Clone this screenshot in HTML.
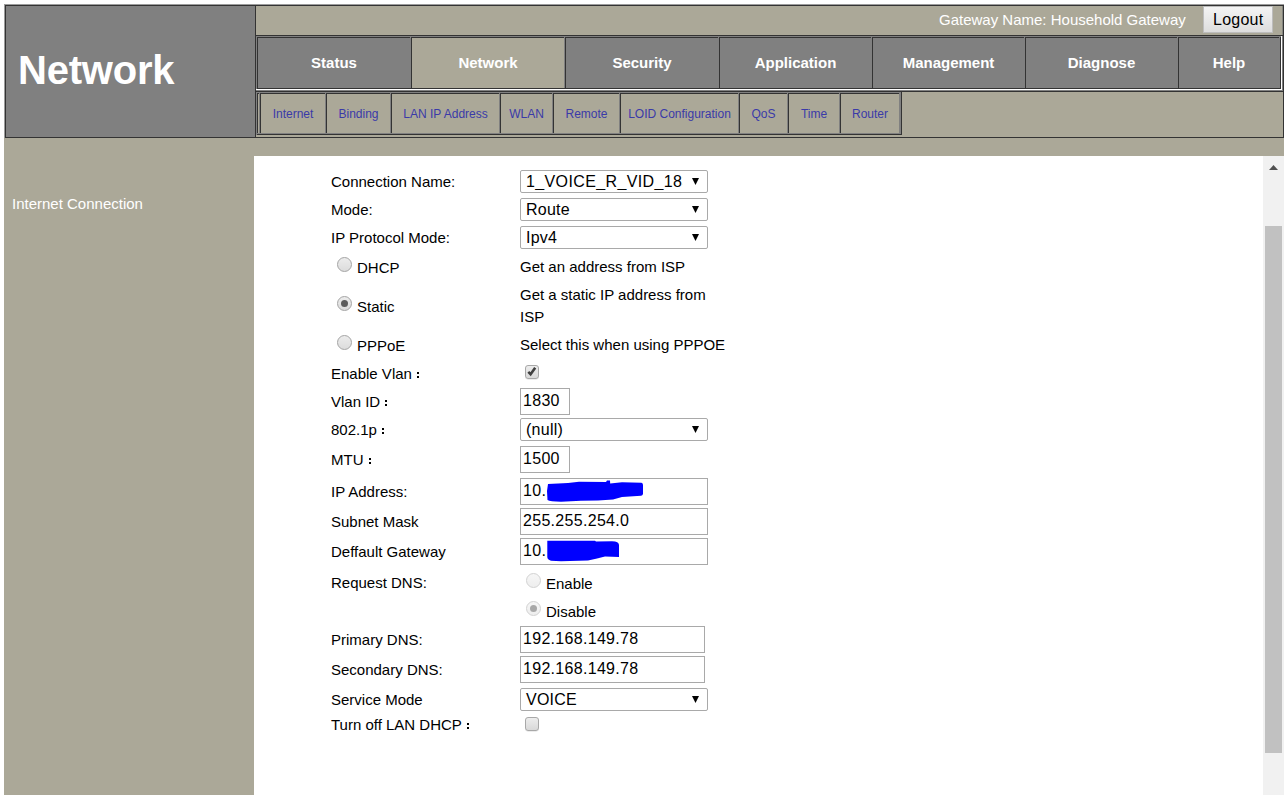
<!DOCTYPE html>
<html><head><meta charset="utf-8">
<style>
html,body{margin:0;padding:0;background:#fff;width:1285px;height:795px;overflow:hidden;}
body{font-family:"Liberation Sans",sans-serif;position:relative;}
.a{position:absolute;box-sizing:border-box;}
.t{position:absolute;white-space:nowrap;line-height:1;}
.dk{background:#333;}
.mm{position:absolute;top:37px;height:51px;background:#808080;border-left:1px solid #333;border-top:1px solid #333;box-sizing:border-box;color:#fff;font-weight:bold;font-size:15px;text-align:center;line-height:50px;}
.mm.on{background:#aba898;}
.sm{position:absolute;top:93px;height:40px;background:#aba898;border-left:1px solid #333;border-top:1px solid #333;box-sizing:border-box;color:#3a3aa8;font-size:12px;text-align:center;line-height:40px;}
.lbl{position:absolute;left:331px;font-size:15px;color:#000;white-space:nowrap;line-height:1;}
.sel{position:absolute;left:520px;width:188px;height:23px;border:1px solid #a9a9a9;border-radius:2px;box-sizing:border-box;background:#fff;font-size:16px;}
.sel span{position:absolute;left:5px;top:3px;letter-spacing:0.25px;line-height:1;white-space:nowrap;}
.sel i{position:absolute;left:171px;top:7px;width:7px;height:7px;background:#000;clip-path:polygon(0 0,100% 0,50% 100%);}
.inp{position:absolute;left:520px;height:27px;border:1px solid #a9a9a9;box-sizing:border-box;background:#fff;font-size:16px;}
.inp span{position:absolute;left:2px;top:4px;letter-spacing:0.3px;line-height:1;white-space:nowrap;}

.fc{display:inline-block;width:2px;height:2px;background:#000;box-shadow:0 4px 0 #000;margin-left:5px;vertical-align:5px;}
.rad{position:absolute;width:15px;height:15px;border-radius:50%;box-sizing:border-box;border:1px solid #a4a4a4;background:linear-gradient(#ececec,#dcdcdc);}
.rad.on::after{content:"";position:absolute;left:3px;top:3px;width:7px;height:7px;border-radius:50%;background:#5c5c5c;}
.rad.dis{border-color:#d2d2d2;background:linear-gradient(#f6f6f6,#eeeeee);}
.rad.dis.on::after{background:#a8a8a8;}
.chk{position:absolute;width:14px;height:14px;box-sizing:border-box;border:1px solid #a8a8a8;border-radius:3px;background:linear-gradient(#ededed,#d9d9d9);box-shadow:0 0.5px 0.5px rgba(0,0,0,0.15);}
.chk svg{position:absolute;left:-1px;top:-1px;}
</style></head>
<body>
<div class="a" style="left:4px;top:4px;width:1px;height:134px;background:#9c9c9c;"></div>
<div class="a" style="left:4px;top:4px;width:1280px;height:1px;background:#9c9c9c;"></div>
<div class="a" style="left:5px;top:5px;width:1279px;height:133px;background:#333;"></div>
<div class="a" style="left:6px;top:6px;width:1277px;height:131px;background:#aba898;"></div>
<div class="a" style="left:6px;top:6px;width:249px;height:131px;background:#808080;"></div>
<div class="a" style="left:255px;top:6px;width:1px;height:131px;background:#333;"></div>
<div class="t" style="left:18px;top:50px;font-size:40px;font-weight:bold;color:#fff;letter-spacing:-0.2px;">Network</div>
<div class="t" style="left:939px;top:12px;font-size:15px;color:#fff;">Gateway Name: Household Gateway</div>
<div class="a" style="left:1203px;top:6px;width:70px;height:27px;background:linear-gradient(#f4f4f4,#dddddd);border:1px solid #bdbdbd;"></div>
<div class="t" style="left:1213px;top:12px;font-size:16px;color:#000;letter-spacing:0.25px;">Logout</div>
<div class="a" style="left:256px;top:35px;width:1027px;height:1px;background:#333;"></div>
<div class="a" style="left:1282px;top:6px;width:1px;height:29px;background:#858580;"></div>
<div class="a" style="left:256px;top:36px;width:1027px;height:55px;background:#808080;"></div>
<div class="a" style="left:256px;top:89px;width:1026px;height:1px;background:#fff;"></div>
<div class="a" style="left:1281px;top:36px;width:1px;height:54px;background:#fff;"></div>
<div class="a" style="left:257px;top:88px;width:1024px;height:1px;background:#333;"></div>
<div class="a" style="left:1280px;top:37px;width:1px;height:52px;background:#333;"></div>
<div class="mm" style="left:257px;width:153px;">Status</div>
<div class="mm on" style="left:411px;width:153px;">Network</div>
<div class="mm" style="left:565px;width:153px;">Security</div>
<div class="mm" style="left:719px;width:152px;">Application</div>
<div class="mm" style="left:872px;width:152px;">Management</div>
<div class="mm" style="left:1025px;width:152px;">Diagnose</div>
<div class="mm" style="left:1178px;width:101px;">Help</div>
<div class="a" style="left:256px;top:91px;width:1027px;height:1px;background:#333;"></div>
<div class="a" style="left:256px;top:92px;width:1px;height:43px;background:#808080;"></div>
<div class="a" style="left:257px;top:92px;width:645px;height:43px;background:#808080;"></div>
<div class="a" style="left:257px;top:93px;width:2px;height:40px;background:#333;"></div>
<div class="a" style="left:258px;top:94px;width:1px;height:39px;background:#aba898;"></div>
<div class="a" style="left:901px;top:92px;width:1px;height:43px;background:#333;"></div>
<div class="a" style="left:257px;top:134px;width:645px;height:1px;background:#333;"></div>
<div class="sm" style="left:260px;width:65px;">Internet</div>
<div class="sm" style="left:326px;width:64px;">Binding</div>
<div class="sm" style="left:391px;width:108px;">LAN IP Address</div>
<div class="sm" style="left:500px;width:52px;">WLAN</div>
<div class="sm" style="left:553px;width:66px;">Remote</div>
<div class="sm" style="left:620px;width:118px;">LOID Configuration</div>
<div class="sm" style="left:739px;width:48px;">QoS</div>
<div class="sm" style="left:788px;width:51px;">Time</div>
<div class="sm" style="left:840px;width:59px;">Router</div>
<!-- below header -->
<div class="a" style="left:4px;top:138px;width:1280px;height:18px;background:#aba898;"></div>
<div class="a" style="left:4px;top:156px;width:250px;height:639px;background:#aba898;"></div>
<div class="t" style="left:12px;top:196px;font-size:15px;color:#fff;">Internet Connection</div>
<!-- scrollbar -->
<div class="a" style="left:1263px;top:156px;width:21px;height:639px;background:#f1f1f1;"></div>
<div class="a" style="left:1265px;top:226px;width:17px;height:527px;background:#c1c1c1;"></div>
<svg class="a" style="left:1263px;top:160px;" width="21" height="14"><polygon points="6,10 15,10 10.5,5" fill="#505050"/></svg>

<!-- form labels -->
<div class="lbl" style="top:174px;">Connection Name:</div>
<div class="lbl" style="top:202px;">Mode:</div>
<div class="lbl" style="top:230px;">IP Protocol Mode:</div>
<div class="lbl" style="top:260px;left:357px;">DHCP</div>
<div class="lbl" style="top:299px;left:357px;">Static</div>
<div class="lbl" style="top:338px;left:357px;">PPPoE</div>
<div class="lbl" style="top:366px;">Enable Vlan<i class="fc"></i></div>
<div class="lbl" style="top:394px;">Vlan ID<i class="fc"></i></div>
<div class="lbl" style="top:422px;">802.1p<i class="fc"></i></div>
<div class="lbl" style="top:452px;">MTU<i class="fc"></i></div>
<div class="lbl" style="top:484px;">IP Address:</div>
<div class="lbl" style="top:514px;">Subnet Mask</div>
<div class="lbl" style="top:544px;">Deffault Gateway</div>
<div class="lbl" style="top:575px;">Request DNS:</div>
<div class="lbl" style="top:632px;">Primary DNS:</div>
<div class="lbl" style="top:662px;">Secondary DNS:</div>
<div class="lbl" style="top:692px;">Service Mode</div>
<div class="lbl" style="top:717px;">Turn off LAN DHCP<i class="fc"></i></div>
<!-- radios -->
<div class="rad" style="left:337px;top:257px;"></div>
<div class="rad on" style="left:337px;top:296px;"></div>
<div class="rad" style="left:337px;top:335px;"></div>
<div class="rad dis" style="left:526px;top:573px;"></div>
<div class="rad dis on" style="left:526px;top:601px;"></div>
<!-- descriptions -->
<div class="lbl" style="left:520px;top:259px;">Get an address from ISP</div>
<div class="lbl" style="left:520px;top:287px;">Get a static IP address from</div>
<div class="lbl" style="left:520px;top:309px;">ISP</div>
<div class="lbl" style="left:520px;top:337px;">Select this when using PPPOE</div>
<div class="lbl" style="left:546px;top:576px;">Enable</div>
<div class="lbl" style="left:546px;top:604px;">Disable</div>
<!-- selects -->
<div class="sel" style="top:170px;"><span style="width:157px;overflow:hidden;letter-spacing:0.38px;">1_VOICE_R_VID_1830</span><i></i></div>
<div class="sel" style="top:198px;"><span>Route</span><i></i></div>
<div class="sel" style="top:226px;"><span>Ipv4</span><i></i></div>
<div class="sel" style="top:418px;"><span>(null)</span><i></i></div>
<div class="sel" style="top:688px;"><span>VOICE</span><i></i></div>
<!-- checkboxes -->
<div class="chk" style="left:525px;top:365px;"><svg width="14" height="14" viewBox="0 0 14 14"><path d="M3.3 6.9 L5.6 9.2 L10.2 2.8" stroke="#404040" stroke-width="2.6" fill="none" stroke-linejoin="miter"/></svg></div>
<div class="chk" style="left:525px;top:717px;"></div>
<!-- inputs -->
<div class="inp" style="top:388px;width:50px;"><span>1830</span></div>
<div class="inp" style="top:446px;width:50px;"><span>1500</span></div>
<div class="inp" style="top:478px;width:188px;"><span>10.</span></div>
<div class="inp" style="top:508px;width:188px;"><span>255.255.254.0</span></div>
<div class="inp" style="top:538px;width:188px;"><span>10.</span></div>
<div class="inp" style="top:626px;width:185px;"><span>192.168.149.78</span></div>
<div class="inp" style="top:656px;width:185px;"><span>192.168.149.78</span></div>
<!-- blue scribbles -->
<svg class="a" style="left:540px;top:476px;" width="110" height="30"><path d="M8 8 L28 7 L39 5.8 L66 6 L67 4.6 L70 4.6 L70.2 7.6 L82 6.3 L101.5 6.8 Q103 7 103 9 L103 18 Q102.5 19.7 101 19.8 L82 21 L73 23.5 L58 24.4 L41 24.8 L21 25.7 Q10 25.5 7.5 24 L7 15 Z" fill="#0000ff"/></svg>
<svg class="a" style="left:540px;top:536px;" width="110" height="30"><path d="M7.3 4.7 L55 4.7 L56 5.5 L72 5.3 Q79 5.5 79 9 L79 21 L65 20.5 L56 22.7 L48 24.4 L21 25.3 L11 24.8 Q7.3 23.5 7.3 21 Z" fill="#0000ff"/></svg>
</body></html>
